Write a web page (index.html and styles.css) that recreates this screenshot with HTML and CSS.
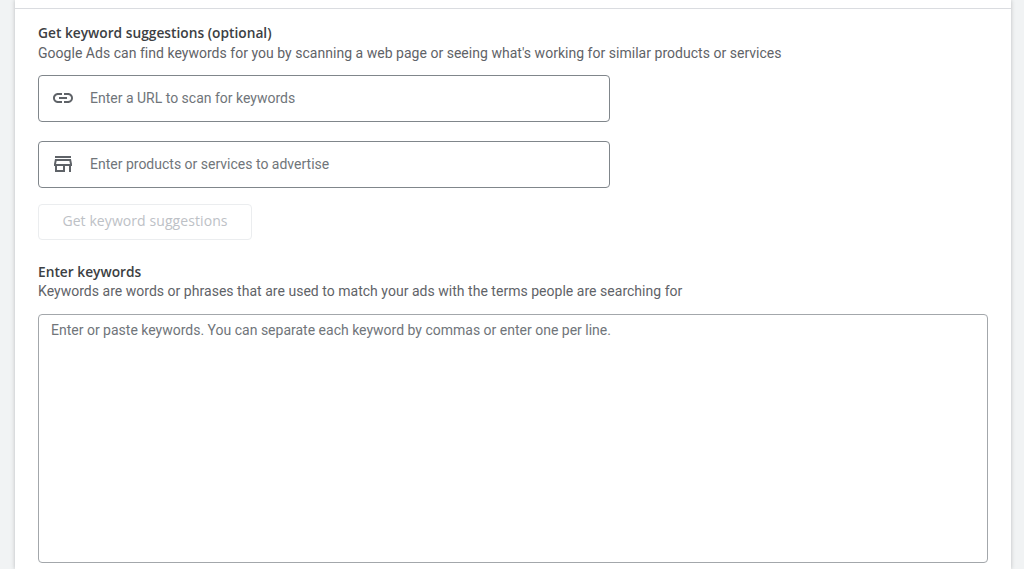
FILE: index.html
```html
<!DOCTYPE html>
<html lang="en">
<head>
    <meta charset="UTF-8">
    <meta name="viewport" content="width=device-width, initial-scale=1.0">
    <title>Keyword suggestions</title>
    <link rel="stylesheet" href="styles.css">
</head>
<body>
    <div class="card">
        <div class="card-top"></div>
        <div class="card-body">
            <div class="section-title">Get keyword suggestions (optional)</div>
            <div class="section-desc">Google Ads can find keywords for you by scanning a web page or seeing what's working for similar products or services</div>

            <div class="field field-url">
                <svg class="field-icon" viewBox="0 0 24 24"><path d="M3.9 12c0-1.71 1.39-3.1 3.1-3.1h4V7H7c-2.76 0-5 2.24-5 5s2.24 5 5 5h4v-1.9H7c-1.71 0-3.1-1.39-3.1-3.1zM8 13h8v-2H8v2zm9-6h-4v1.9h4c1.71 0 3.1 1.39 3.1 3.1s-1.39 3.1-3.1 3.1h-4V17h4c2.76 0 5-2.24 5-5s-2.24-5-5-5z"/></svg>
                <span class="field-placeholder">Enter a URL to scan for keywords</span>
            </div>

            <div class="field field-products">
                <svg class="field-icon" viewBox="0 0 24 24"><path d="M20 4H4v2h16V4zm1 10v-2l-1-5H4l-1 5v2h1v6h10v-6h4v6h2v-6h1zm-9 4H6v-4h6v4zm-6.96-6l.6-3h12.72l.6 3H5.04z"/></svg>
                <span class="field-placeholder">Enter products or services to advertise</span>
            </div>

            <button class="suggest-btn" disabled>Get keyword suggestions</button>

            <div class="section-title keywords-title">Enter keywords</div>
            <div class="section-desc keywords-desc">Keywords are words or phrases that are used to match your ads with the terms people are searching for</div>

            <div class="keywords-box">Enter or paste keywords. You can separate each keyword by commas or enter one per line.</div>
        </div>
    </div>
</body>
</html>
```

FILE: styles.css
```css
html, body {
    height: 100%;
}

body {
    margin: 0;
    background-color: #f1f3f4;
    font-family: Roboto, Arial, sans-serif;
    font-size: 14px;
    color: #5f6368;
    overflow: hidden;
}

.card {
    width: 996px;
    height: 569px;
    margin-left: 15px;
    background-color: #fff;
    box-shadow: 0 0 4px rgba(60, 64, 67, 0.3);
}

.card-top {
    height: 8px;
    border-bottom: 1px solid #dadce0;
}

.card-body {
    padding: 16px 23px 0;
}

.section-title {
    font-family: "Open Sans", Arial, sans-serif;
    font-size: 13.75px;
    line-height: 16px;
    font-weight: 600;
    color: #3c4043;
}

.section-desc {
    margin-top: 4px;
    line-height: 17px;
    letter-spacing: 0.025px;
}

.field {
    display: flex;
    align-items: center;
    box-sizing: border-box;
    width: 572px;
    height: 47px;
    padding: 0 0 2px 11.5px;
    border: 1px solid #80868b;
    border-radius: 4px;
}

.field-url {
    margin-top: 13px;
}

.field-products {
    margin-top: 19px;
}

.field-icon {
    width: 24px;
    height: 24px;
    margin-right: 15.5px;
    fill: #5f6368;
    flex-shrink: 0;
}

.field-placeholder {
    color: #70757a;
}

.suggest-btn {
    display: block;
    box-sizing: border-box;
    width: 214px;
    height: 36px;
    margin-top: 16px;
    padding: 0 0 3px;
    background-color: #fff;
    border: 1px solid #ebedef;
    border-radius: 4px;
    font-family: "Open Sans", Arial, sans-serif;
    font-size: 14px;
    font-weight: 500;
    letter-spacing: 0.08px;
    color: #bdc1c6;
}

.keywords-title {
    margin-top: 24px;
}

.keywords-desc {
    margin-top: 3px;
}

.keywords-box {
    box-sizing: border-box;
    width: 950px;
    height: 249px;
    margin-top: 14px;
    padding: 7px 12px;
    border: 1px solid #a3a7ab;
    border-radius: 4px;
    line-height: 16px;
    color: #70757a;
}
```
